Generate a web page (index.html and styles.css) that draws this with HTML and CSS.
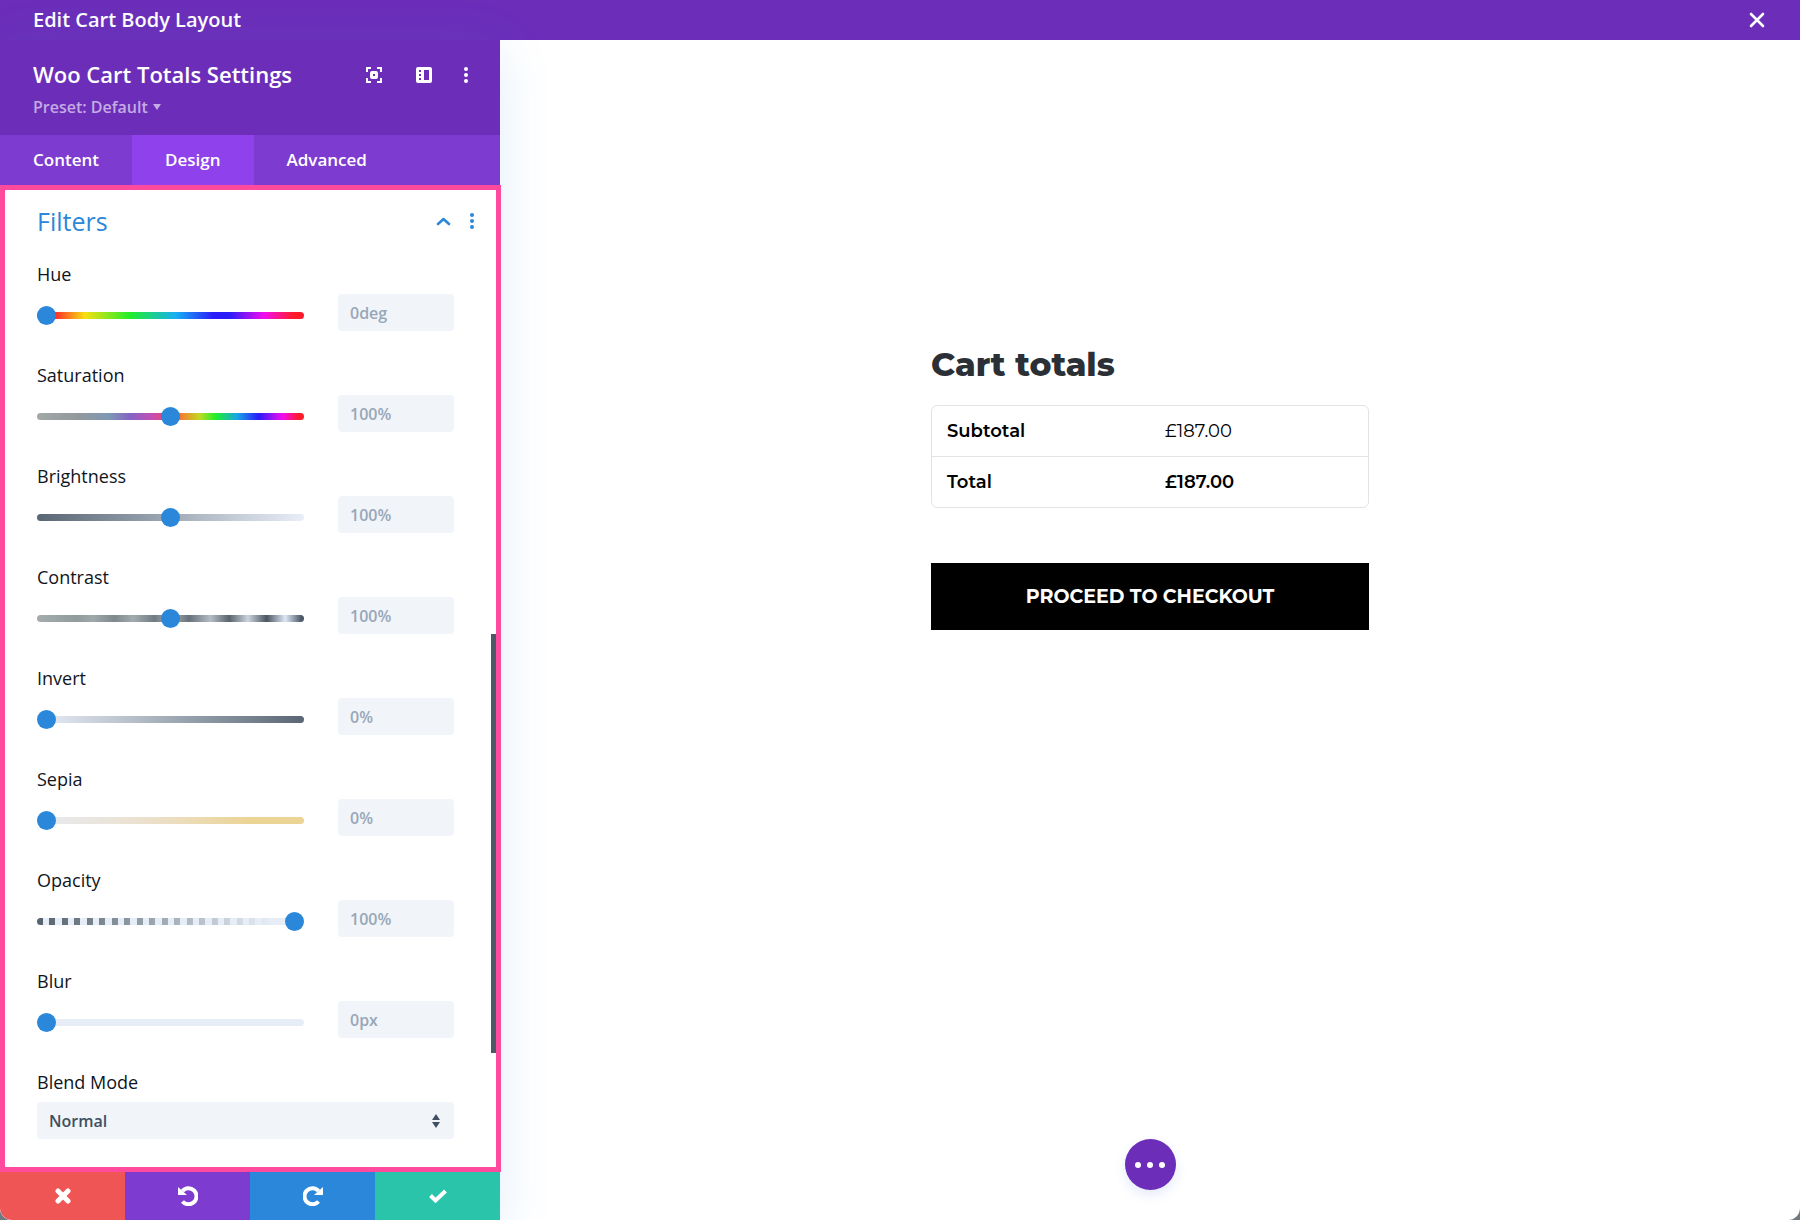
FILE: index.html
```html
<!DOCTYPE html>
<html lang="en">
<head>
    <meta charset="UTF-8">
    <meta name="viewport" content="width=device-width, initial-scale=1.0">
    <title>Edit Cart Body Layout</title>
    <link rel="stylesheet" href="styles.css">
</head>
<body>
<div class="app">
    <header class="topbar">
        <h1>Edit Cart Body Layout</h1>
        <button type="button" class="icon-btn" aria-label="Close">
            <svg width="16" height="16" viewBox="0 0 16 16"><path d="M2 2l12 12M14 2L2 14" fill="none" stroke="#fff" stroke-width="2.6" stroke-linecap="round"/></svg>
        </button>
    </header>

    <div class="workspace">
        <aside class="sidebar">
            <div class="settings-head">
                <div>
                    <h2>Woo Cart Totals Settings</h2>
                    <button type="button" class="preset">Preset: Default
                        <svg width="8" height="6" viewBox="0 0 8 6"><path d="M0 0h8L4 6z" fill="currentColor"/></svg>
                    </button>
                </div>
                <div class="head-icons">
                    <button type="button" class="icon-btn" aria-label="Expand modal">
                        <svg width="16" height="16" viewBox="0 0 16 16" fill="none" stroke="#fff"><path d="M1 5V1h4M11 1h4v4M15 11v4h-4M5 15H1v-4" stroke-width="2"/><rect x="5.5" y="5.5" width="5" height="5" rx="0.5" stroke-width="3"/></svg>
                    </button>
                    <button type="button" class="icon-btn" aria-label="Snap to side">
                        <svg width="16" height="16" viewBox="0 0 16 16"><path fill="#fff" fill-rule="evenodd" d="M2 0h12a2 2 0 0 1 2 2v12a2 2 0 0 1-2 2H2a2 2 0 0 1-2-2V2a2 2 0 0 1 2-2zM8 3v10h5V3zM3 3v2h2V3zM3 7v2h2V7zM3 11v2h2v-2z"/></svg>
                    </button>
                    <button type="button" class="icon-btn" aria-label="More options">
                        <svg width="6" height="16" viewBox="0 0 6 16" fill="#fff"><circle cx="3" cy="2" r="2"/><circle cx="3" cy="8" r="2"/><circle cx="3" cy="14" r="2"/></svg>
                    </button>
                </div>
            </div>

            <nav class="tabs">
                <a href="#content">Content</a>
                <a href="#design" class="active">Design</a>
                <a href="#advanced">Advanced</a>
            </nav>

            <section class="panel" id="design">
                <div class="panel-title">
                    <h3>Filters</h3>
                    <button type="button" class="icon-btn" aria-label="Collapse">
                        <svg width="15" height="9" viewBox="0 0 15 9"><path d="M2 7l5.500-5L13 7" fill="none" stroke="#2b87da" stroke-width="2.600" stroke-linecap="round" stroke-linejoin="round"/></svg>
                    </button>
                    <button type="button" class="icon-btn" aria-label="Filter options">
                        <svg width="4" height="16" viewBox="0 0 4 16" fill="#2b87da"><circle cx="2" cy="2" r="2"/><circle cx="2" cy="8" r="2"/><circle cx="2" cy="14" r="2"/></svg>
                    </button>
                </div>

                <div class="field">
                    <label for="hue">Hue</label>
                    <input type="range" id="hue" class="hue" min="0" max="360" value="0">
                    <input type="text" value="0deg" aria-label="Hue value">
                </div>
                <div class="field">
                    <label for="saturation">Saturation</label>
                    <input type="range" id="saturation" class="saturation" min="0" max="200" value="100">
                    <input type="text" value="100%" aria-label="Saturation value">
                </div>
                <div class="field">
                    <label for="brightness">Brightness</label>
                    <input type="range" id="brightness" class="brightness" min="0" max="200" value="100">
                    <input type="text" value="100%" aria-label="Brightness value">
                </div>
                <div class="field">
                    <label for="contrast">Contrast</label>
                    <input type="range" id="contrast" class="contrast" min="0" max="200" value="100">
                    <input type="text" value="100%" aria-label="Contrast value">
                </div>
                <div class="field">
                    <label for="invert">Invert</label>
                    <input type="range" id="invert" class="invert" min="0" max="100" value="0">
                    <input type="text" value="0%" aria-label="Invert value">
                </div>
                <div class="field">
                    <label for="sepia">Sepia</label>
                    <input type="range" id="sepia" class="sepia" min="0" max="100" value="0">
                    <input type="text" value="0%" aria-label="Sepia value">
                </div>
                <div class="field">
                    <label for="opacity">Opacity</label>
                    <input type="range" id="opacity" class="opacity" min="0" max="100" value="100">
                    <input type="text" value="100%" aria-label="Opacity value">
                </div>
                <div class="field">
                    <label for="blur">Blur</label>
                    <input type="range" id="blur" min="0" max="50" value="0">
                    <input type="text" value="0px" aria-label="Blur value">
                </div>
                <div class="field">
                    <label for="blend">Blend Mode</label>
                    <div class="select-wrap">
                        <select id="blend">
                            <option>Normal</option>
                            <option>Multiply</option>
                            <option>Screen</option>
                            <option>Overlay</option>
                        </select>
                        <svg class="select-arrows" width="8" height="14" viewBox="0 0 8 14" fill="#3e5062"><path d="M4 0l4 6H0zM0 8h8l-4 6z"/></svg>
                    </div>
                </div>
                <div class="scrollbar"></div>
            </section>

            <div class="actions">
                <button type="button" class="discard" aria-label="Discard changes">
                    <svg width="16" height="16" viewBox="0 0 16 16"><path d="M3 3l10 10M13 3L3 13" stroke="#fff" stroke-width="5" stroke-linecap="round"/></svg>
                </button>
                <button type="button" class="undo" aria-label="Undo">
                    <svg width="20" height="20" viewBox="0 0 20 20"><path d="M4.500 5A8 8 0 1 1 4.500 15.500" fill="none" stroke="#fff" stroke-width="4"/><path d="M0 1v8h9z" fill="#fff"/></svg>
                </button>
                <button type="button" class="redo" aria-label="Redo">
                    <svg width="20" height="20" viewBox="0 0 20 20"><path d="M15.500 5A8 8 0 1 0 15.500 15.500" fill="none" stroke="#fff" stroke-width="4"/><path d="M20 1v8h-9z" fill="#fff"/></svg>
                </button>
                <button type="button" class="save" aria-label="Save changes">
                    <svg width="18" height="14" viewBox="0 0 18 14"><path d="M1.500 6.500l5 5L16.500 2" fill="none" stroke="#fff" stroke-width="4"/></svg>
                </button>
            </div>
        </aside>

        <main class="canvas">
            <div class="cart">
                <h2>Cart totals</h2>
                <table>
                    <tbody>
                        <tr>
                            <th scope="row">Subtotal</th>
                            <td>£187.00</td>
                        </tr>
                        <tr class="total">
                            <th scope="row">Total</th>
                            <td>£187.00</td>
                        </tr>
                    </tbody>
                </table>
                <a href="#checkout" class="checkout">PROCEED TO CHECKOUT</a>
            </div>
            <button type="button" class="page-menu" aria-label="Page settings">
                <svg width="30" height="6" viewBox="0 0 30 6" fill="#fff"><circle cx="3" cy="3" r="3"/><circle cx="15" cy="3" r="3"/><circle cx="27" cy="3" r="3"/></svg>
            </button>
        </main>
    </div>
</div>
</body>
</html>
```
FILE: styles.css
```css
* {
    box-sizing: border-box;
}
body {
    margin: 0;
    background-color: #6f7a80;
    font-family: "Open Sans", Arial, sans-serif;
    color: #20292f;
}
h1, h2, h3 {
    margin: 0;
}
button {
    border: 0;
    padding: 0;
    background: none;
    font-family: inherit;
    cursor: pointer;
}
svg {
    display: block;
}
.app {
    display: flex;
    flex-direction: column;
    min-height: 100vh;
    background-color: #fff;
    border-radius: 0 0 12px 12px;
    overflow: hidden;
}

/* top bar */
.topbar {
    display: flex;
    align-items: center;
    justify-content: space-between;
    height: 40px;
    padding: 0 35px 0 33px;
    background-color: #6c2eb9;
    color: #fff;
}
.topbar h1 {
    font-size: 20px;
    line-height: 28px;
    font-weight: 600;
}
.workspace {
    display: flex;
    flex: 1;
}

/* settings sidebar */
.sidebar {
    display: flex;
    flex-direction: column;
    width: 500px;
    flex-shrink: 0;
    background-color: #fff;
    box-shadow: 0 10px 50px rgba(43, 135, 218, 0.14);
}
.settings-head {
    display: flex;
    justify-content: space-between;
    height: 95px;
    padding: 19px 31px 0 33px;
    background-color: #6c2eb9;
    color: #fff;
}
.settings-head h2 {
    font-size: 22px;
    line-height: 30px;
    font-weight: 600;
}
.preset {
    display: flex;
    align-items: center;
    gap: 5px;
    margin-top: 6px;
    font-size: 16px;
    line-height: 24px;
    font-weight: 600;
    color: #c4abe3;
}
.head-icons {
    display: flex;
    align-items: center;
    gap: 34px;
    height: 32px;
}
.head-icons .icon-btn:last-child {
    margin-left: -3px;
}
.tabs {
    display: flex;
    background-color: #7e3bd0;
}
.tabs a {
    padding: 0 33px;
    font-size: 17px;
    line-height: 50px;
    font-weight: 600;
    color: #fff;
    text-decoration: none;
}
.tabs a.active {
    background-color: #8f42ec;
}

/* filters panel */
.panel {
    position: relative;
    flex: 1;
    margin-right: -1px;
    padding: 15px 42px 28px 32px;
    border: 5px solid #ff4a9e;
    background-color: #fff;
}
.panel-title {
    display: flex;
    align-items: center;
    gap: 19px;
    margin: 0 -20px 25px 0;
}
.panel-title h3 {
    flex: 1;
    font-size: 25px;
    line-height: 32px;
    font-weight: 400;
    color: #2b87da;
}
.field {
    display: grid;
    grid-template-columns: 1fr 116px;
    column-gap: 34px;
    row-gap: 8px;
    align-items: center;
    margin-bottom: 32px;
}
.field:nth-last-child(2) {
    margin-bottom: 0;
}
.field label {
    grid-column: 1 / 3;
    font-size: 18px;
    line-height: 24px;
    color: #0f151c;
}
.field input[type="text"],
.field select {
    width: 100%;
    height: 37px;
    padding: 0 12px;
    border: 0;
    border-radius: 4px;
    background-color: #f1f4f9;
    font-family: inherit;
    font-size: 16px;
    font-weight: 600;
    color: #98a7b8;
}
.select-wrap {
    position: relative;
    grid-column: 1 / 3;
}
.field select {
    display: block;
    appearance: none;
    color: #3e5062;
}
.select-arrows {
    position: absolute;
    top: 12px;
    right: 14px;
    pointer-events: none;
}

/* sliders */
input[type="range"] {
    --track: #e7edf6;
    appearance: none;
    width: 100%;
    height: 19px;
    margin: 5px 0 0;
    background: none;
}
input[type="range"]::-webkit-slider-runnable-track {
    height: 7px;
    border-radius: 4px;
    background: var(--track);
}
input[type="range"]::-webkit-slider-thumb {
    appearance: none;
    width: 19px;
    height: 19px;
    margin-top: -6px;
    border-radius: 50%;
    background-color: #2b87da;
}
input.hue {
    --track: linear-gradient(to right, #ff1f2d 6%, #f7e010 18%, #1fee2c 35%, #18aef5 52%, #2a1cf8 66%, #2a1cf8 72%, #f20df0 85%, #ff1a2b 96%);
}
input.saturation {
    --track: linear-gradient(to right, #a2a8a8, #93999c 15%, #7e98b4 27%, #8563c4 35%, #c44fb4 43%, #f2455c 50%, #ee8c2e 55%, #bedb20 61%, #1fee2c 67%, #18a4e8 75%, #2a1cf8 83%, #f20df0 92%, #ff1a2b 98%);
}
input.brightness {
    --track: linear-gradient(to right, #5a6673, #909ca8 40%, #b7c0ca 65%, #e9eef9);
}
input.contrast {
    --track: linear-gradient(to right, #a4acac, #929b9c 15%, #a0a8ab 21%, #7f888d 29%, #a3abae 36%, #717b82 44%, #a8b0b6 50%, #68727a 57%, #b4bcc4 65%, #59646d 72%, #ccd4de 79%, #4b5661 86%, #dfe7f5 93%, #4c5866 99%);
}
input.invert {
    --track: linear-gradient(to right, #e9eef9, #b7c0ca 35%, #909ca8 60%, #5a6673);
}
input.sepia {
    --track: linear-gradient(to right, #e7ebf2, #ecdfc9 45%, #ebd494 80%, #ebd494);
}
input.opacity {
    --track: repeating-linear-gradient(to right, transparent 0, transparent 6px, #e7edf6 6px, #e7edf6 12px, transparent 12px, transparent 18px, #e7edf6 18px, #e7edf6 25px), linear-gradient(to right, #56626e, #909ca8 38%, #e7edf6 88%);
}

/* sits over the panel edge */
.scrollbar {
    position: absolute;
    top: 444px;
    right: 0;
    width: 5px;
    height: 419px;
    background-color: #4c5866;
}

/* bottom buttons */
.actions {
    display: grid;
    grid-template-columns: repeat(4, 1fr);
    height: 48px;
}
.actions button {
    display: flex;
    align-items: center;
    justify-content: center;
}
.discard { background-color: #ef5555; }
.undo { background-color: #7e3bd0; }
.redo { background-color: #2b87da; }
.save { background-color: #29c4a9; }

/* page preview */
.canvas {
    display: flex;
    flex: 1;
    flex-direction: column;
    align-items: center;
    justify-content: space-between;
    padding: 304px 40px 30px;
    font-family: Montserrat, Inter, sans-serif;
}
.cart {
    width: 100%;
    max-width: 438px;
}
.cart h2 {
    font-size: 33px;
    line-height: 40px;
    font-weight: 800;
    color: #2b3036;
}
.cart table {
    width: 100%;
    margin: 21px 0 55px;
    border: 1px solid #e3e3e3;
    border-radius: 6px;
    border-spacing: 0;
    font-size: 18px;
    line-height: 24px;
    color: #000;
}
.cart th,
.cart td {
    width: 50%;
    padding: 13px 15px;
    text-align: left;
}
.cart th {
    font-weight: 600;
}
.cart .total th,
.cart .total td {
    border-top: 1px solid #e3e3e3;
    font-weight: 600;
}
.checkout {
    display: block;
    padding: 21px 20px;
    background-color: #000;
    font-size: 19px;
    line-height: 25px;
    font-weight: 700;
    color: #fff;
    text-align: center;
    text-decoration: none;
}
.page-menu {
    display: flex;
    align-items: center;
    justify-content: center;
    width: 51px;
    height: 51px;
    border-radius: 50%;
    background-color: #6c2eb9;
    box-shadow: 0 5px 12px rgba(43, 85, 218, 0.12);
}
```
